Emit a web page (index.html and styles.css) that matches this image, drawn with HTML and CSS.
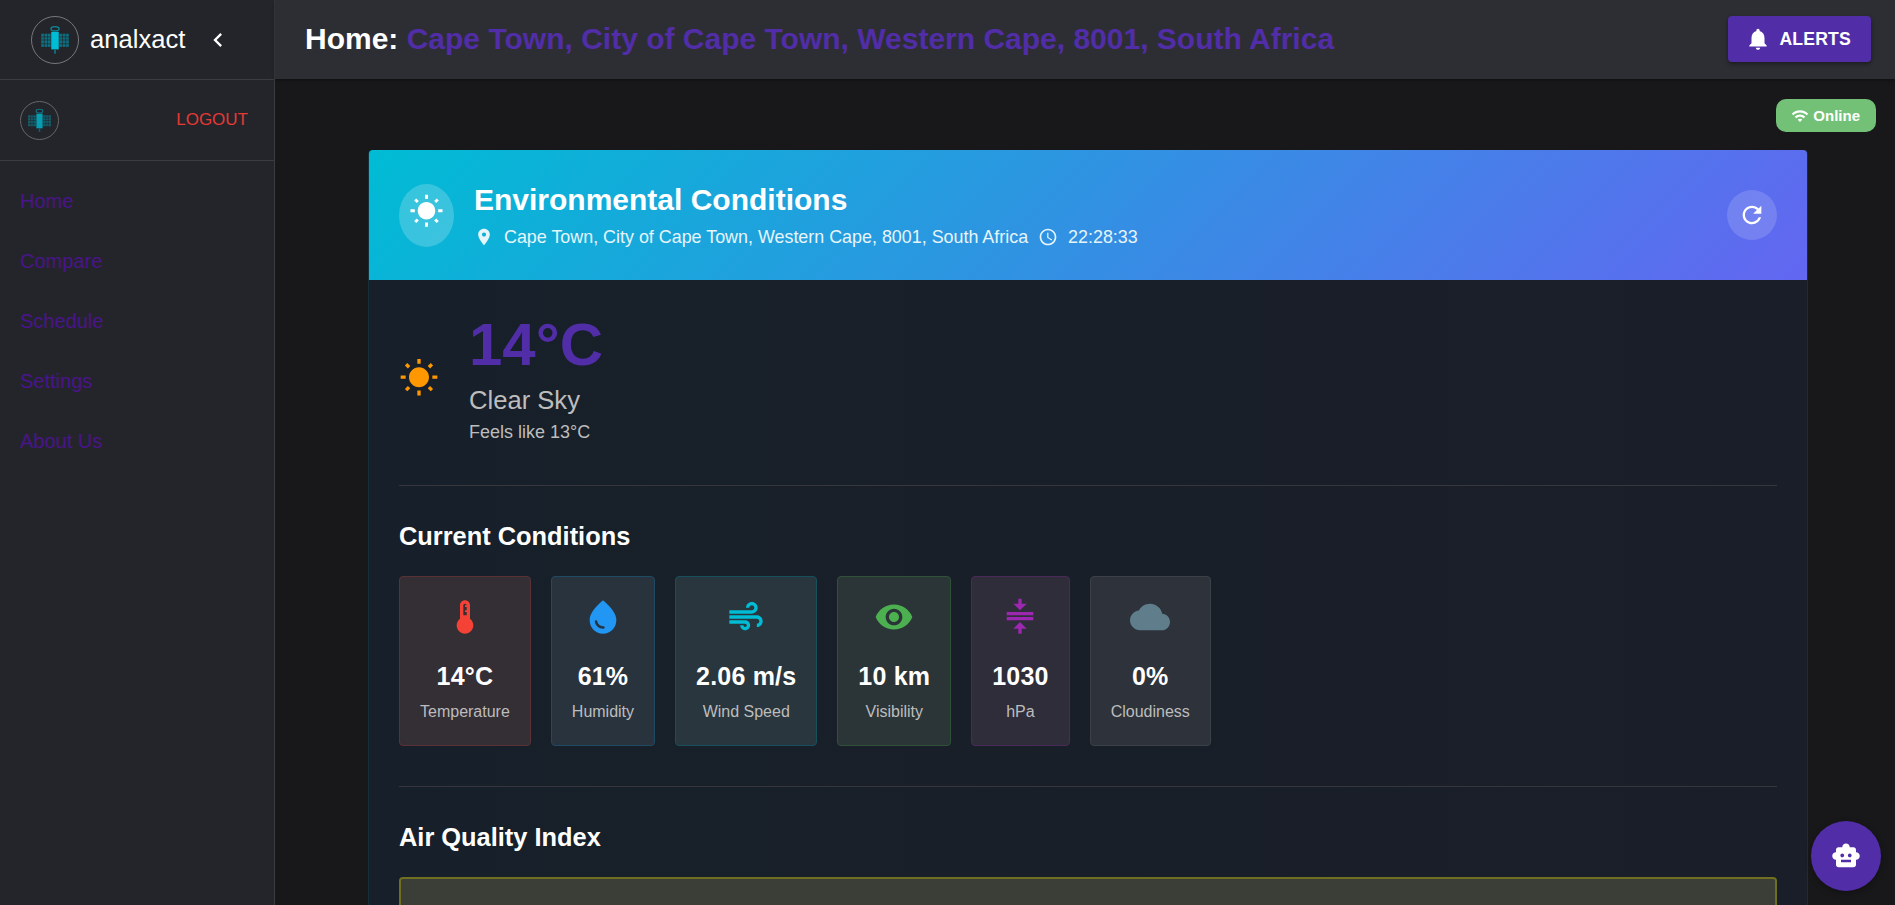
FILE: index.html
```html
<!DOCTYPE html>
<html lang="en">
<head>
    <meta charset="UTF-8">
    <meta name="viewport" content="width=device-width, initial-scale=1.0">
    <title>analxact</title>
    <link rel="stylesheet" href="styles.css">
</head>
<body>

    <!-- Shared icons -->
    <svg class="sprite" aria-hidden="true">
        <symbol id="i-sun" viewBox="0 0 24 24"><path d="M6.76 4.84l-1.8-1.79-1.41 1.41 1.79 1.79 1.42-1.41zM4 10.5H1v2h3v-2zm9-9.95h-2V3.5h2V.55zm7.45 3.91l-1.41-1.41-1.79 1.79 1.41 1.41 1.79-1.79zm-3.21 13.7l1.79 1.8 1.41-1.41-1.8-1.79-1.4 1.4zM20 10.5v2h3v-2h-3zm-8-5c-3.31 0-6 2.69-6 6s2.69 6 6 6 6-2.69 6-6-2.69-6-6-6zm-1 16.95h2V19.5h-2v2.95zm-7.45-3.91l1.41 1.41 1.79-1.8-1.41-1.41-1.79 1.8z"/></symbol>
        <symbol id="i-sat" viewBox="0 0 48 48">
            <rect x="2" y="14" width="15" height="21" fill="#0e6f80"/>
            <rect x="31" y="14" width="15" height="21" fill="#0e6f80"/>
            <path d="M7 14v21M12 14v21M36 14v21M41 14v21M2 19h15M2 24h15M2 30h15M31 19h15M31 24h15M31 30h15" stroke="#24252a" stroke-width="1"/>
            <rect x="18" y="11" width="12" height="28" fill="#00bcd4"/>
            <rect x="22.5" y="39" width="3" height="7" fill="#0e6f80"/>
            <ellipse cx="24" cy="6" rx="6.5" ry="3.5" fill="none" stroke="#0e8a9c" stroke-width="2"/>
        </symbol>
    </svg>

    <aside class="sidebar">
        <div class="brand">
            <span class="logo logo-large"><svg><use href="#i-sat"/></svg></span>
            <span class="brand-name">analxact</span>
            <svg class="chevron" viewBox="0 0 24 24"><path d="M15.41 7.41L14 6l-6 6 6 6 1.41-1.41L10.83 12z"/></svg>
        </div>
        <div class="account">
            <span class="logo logo-small"><svg><use href="#i-sat"/></svg></span>
            <a class="logout">LOGOUT</a>
        </div>
        <nav class="nav">
            <a>Home</a>
            <a>Compare</a>
            <a>Schedule</a>
            <a>Settings</a>
            <a>About Us</a>
        </nav>
    </aside>

    <div class="main">
        <header class="topbar">
            <h1>Home: <span>Cape Town, City of Cape Town, Western Cape, 8001, South Africa</span></h1>
            <button class="alerts">
                <svg viewBox="0 0 24 24"><path d="M12 22c1.1 0 2-.9 2-2h-4c0 1.1.89 2 2 2zm6-6v-5c0-3.07-1.64-5.64-4.5-6.32V4c0-.83-.67-1.5-1.5-1.5s-1.5.67-1.5 1.5v.68C7.63 5.36 6 7.92 6 11v5l-2 2v1h16v-1l-2-2z"/></svg>
                ALERTS
            </button>
        </header>

        <div class="content">
            <div class="status-row">
                <span class="online">
                    <svg viewBox="0 0 24 24"><path d="M1 9l2 2c4.97-4.97 13.03-4.97 18 0l2-2C16.93 2.93 7.08 2.93 1 9zm8 8l3 3 3-3c-1.65-1.66-4.34-1.66-6 0zm-4-4l2 2c2.76-2.76 7.24-2.76 10 0l2-2C15.14 9.14 8.87 9.14 5 13z"/></svg>
                    Online
                </span>
            </div>

            <section class="card">
                <div class="card-header">
                    <span class="avatar"><svg><use href="#i-sun"/></svg></span>
                    <div class="heading">
                        <h2>Environmental Conditions</h2>
                        <div class="meta">
                            <svg viewBox="0 0 24 24"><path d="M12 2C8.13 2 5 5.13 5 9c0 5.25 7 13 7 13s7-7.75 7-13c0-3.87-3.13-7-7-7zm0 9.5c-1.38 0-2.5-1.12-2.5-2.5s1.12-2.5 2.5-2.5 2.5 1.12 2.5 2.5-1.12 2.5-2.5 2.5z"/></svg>
                            <span>Cape Town, City of Cape Town, Western Cape, 8001, South Africa</span>
                            <svg viewBox="0 0 24 24"><path d="M11.99 2C6.47 2 2 6.48 2 12s4.47 10 9.99 10C17.52 22 22 17.52 22 12S17.52 2 11.99 2zM12 20c-4.42 0-8-3.58-8-8s3.58-8 8-8 8 3.58 8 8-3.58 8-8 8z"/><path d="M12.5 7H11v6l5.25 3.15.75-1.23-4.5-2.67z"/></svg>
                            <span>22:28:33</span>
                        </div>
                    </div>
                    <button class="refresh">
                        <svg viewBox="0 0 24 24"><path d="M17.65 6.35C16.2 4.9 14.21 4 12 4c-4.42 0-7.99 3.58-7.99 8s3.57 8 7.99 8c3.73 0 6.84-2.55 7.73-6h-2.08c-.82 2.33-3.04 4-5.65 4-3.31 0-6-2.69-6-6s2.69-6 6-6c1.66 0 3.14.69 4.22 1.78L13 11h7V4l-2.35 2.35z"/></svg>
                    </button>
                </div>

                <div class="card-body">
                    <div class="summary">
                        <svg class="summary-icon"><use href="#i-sun"/></svg>
                        <div>
                            <div class="temp">14°C</div>
                            <div class="sky">Clear Sky</div>
                            <div class="feels">Feels like 13°C</div>
                        </div>
                    </div>

                    <hr>

                    <h3>Current Conditions</h3>
                    <div class="metrics">
                        <div class="metric red">
                            <svg viewBox="0 0 24 24"><path d="M15 13V5c0-1.66-1.34-3-3-3S9 3.34 9 5v8c-1.21.91-2 2.37-2 4 0 2.76 2.24 5 5 5s5-2.24 5-5c0-1.63-.79-3.09-2-4zm-4-8c0-.55.45-1 1-1s1 .45 1 1h-1v1h1v2h-1v1h1v2h-2V5z"/></svg>
                            <div class="value">14°C</div>
                            <div class="label">Temperature</div>
                        </div>
                        <div class="metric blue">
                            <svg viewBox="0 0 24 24"><path d="M12 2c-5.33 4.55-8 8.48-8 11.8 0 4.98 3.8 8.2 8 8.2s8-3.22 8-8.2c0-3.32-2.67-7.25-8-11.8zM7.83 14c.37 0 .67.26.74.62.41 2.22 2.28 2.98 3.64 2.87.43-.02.79.32.79.75 0 .4-.32.73-.72.75-2.13.13-4.62-1.09-5.19-4.12-.08-.45.28-.87.74-.87z"/></svg>
                            <div class="value">61%</div>
                            <div class="label">Humidity</div>
                        </div>
                        <div class="metric cyan">
                            <svg viewBox="0 0 24 24"><path d="M14.5 17c0 1.65-1.35 3-3 3s-3-1.35-3-3h2c0 .55.45 1 1 1s1-.45 1-1-.45-1-1-1H2v-2h9.5c1.65 0 3 1.35 3 3zM19 6.5C19 4.57 17.43 3 15.5 3S12 4.57 12 6.5h2c0-.83.67-1.5 1.5-1.5s1.5.67 1.5 1.5S16.33 8 15.5 8H2v2h13.5c1.93 0 3.5-1.57 3.5-3.5zm-.5 4.5H2v2h16.5c.83 0 1.5.67 1.5 1.5s-.67 1.5-1.5 1.5v2c1.93 0 3.5-1.57 3.5-3.5S20.43 11 18.5 11z"/></svg>
                            <div class="value">2.06 m/s</div>
                            <div class="label">Wind Speed</div>
                        </div>
                        <div class="metric green">
                            <svg viewBox="0 0 24 24"><path d="M12 4.5C7 4.5 2.73 7.61 1 12c1.73 4.39 6 7.5 11 7.5s9.27-3.11 11-7.5c-1.73-4.39-6-7.5-11-7.5zM12 17c-2.76 0-5-2.24-5-5s2.24-5 5-5 5 2.24 5 5-2.24 5-5 5zm0-8c-1.66 0-3 1.34-3 3s1.34 3 3 3 3-1.34 3-3-1.34-3-3-3z"/></svg>
                            <div class="value">10 km</div>
                            <div class="label">Visibility</div>
                        </div>
                        <div class="metric purple">
                            <svg viewBox="0 0 24 24"><path d="M8 19h3v3h2v-3h3l-4-4-4 4zm8-15h-3V1h-2v3H8l4 4 4-4zM4 9v2h16V9H4zm0 3h16v2H4v-2z"/></svg>
                            <div class="value">1030</div>
                            <div class="label">hPa</div>
                        </div>
                        <div class="metric grey">
                            <svg viewBox="0 0 24 24"><path d="M19.35 10.04C18.67 6.59 15.64 4 12 4 9.11 4 6.6 5.64 5.35 8.04 2.34 8.36 0 10.91 0 14c0 3.31 2.69 6 6 6h13c2.76 0 5-2.24 5-5 0-2.64-2.05-4.78-4.65-4.96z"/></svg>
                            <div class="value">0%</div>
                            <div class="label">Cloudiness</div>
                        </div>
                    </div>

                    <hr>

                    <h3>Air Quality Index</h3>
                    <div class="aqi"></div>
                </div>
            </section>
        </div>
    </div>

    <button class="bot">
        <svg viewBox="0 0 24 24"><path d="M20 9V7c0-1.1-.9-2-2-2h-3c0-1.66-1.34-3-3-3S9 3.34 9 5H6c-1.1 0-2 .9-2 2v2c-1.66 0-3 1.34-3 3s1.34 3 3 3v4c0 1.1.9 2 2 2h12c1.1 0 2-.9 2-2v-4c1.66 0 3-1.34 3-3s-1.34-3-3-3zM7.5 11.5C7.5 10.67 8.17 10 9 10s1.5.67 1.5 1.5S9.83 13 9 13s-1.5-.67-1.5-1.5zM16 17H8v-2h8v2zm-1-4c-.83 0-1.5-.67-1.5-1.5S14.17 10 15 10s1.5.67 1.5 1.5S15.83 13 15 13z"/></svg>
    </button>

</body>
</html>
```

FILE: styles.css
```css
* {
    box-sizing: border-box;
}

body {
    margin: 0;
    height: 100vh;
    overflow: hidden;
    display: flex;
    background: #18181a;
    color: #fff;
    font-family: "Liberation Sans", Arial, sans-serif;
}

svg {
    fill: currentColor;
    display: block;
    flex-shrink: 0;
}

.sprite {
    display: none;
}

/* Sidebar */
.sidebar {
    width: 275px;
    flex-shrink: 0;
    background: #24252a;
    border-right: 1px solid #3b3c42;
}

.brand {
    height: 80px;
    display: flex;
    align-items: center;
    padding-left: 31px;
    border-bottom: 1px solid #3b3c42;
}

.logo {
    display: flex;
    align-items: center;
    justify-content: center;
    border: 1px solid #77787c;
    border-radius: 50%;
}

.logo-large {
    width: 48px;
    height: 48px;
}

.logo-large svg {
    width: 30px;
    height: 30px;
}

.logo-small {
    width: 39px;
    height: 39px;
    opacity: 0.8;
}

.logo-small svg {
    width: 25px;
    height: 25px;
}

.brand-name {
    margin-left: 11px;
    font-size: 25.6px;
}

.chevron {
    width: 28px;
    height: 28px;
    margin-left: 19px;
}

.account {
    height: 81px;
    display: flex;
    align-items: center;
    justify-content: space-between;
    padding: 0 26px 0 20px;
    border-bottom: 1px solid #3b3c42;
}

.logout {
    color: #e53935;
    font-size: 17px;
}

.nav {
    display: flex;
    flex-direction: column;
    padding-top: 10px;
}

.nav a {
    height: 60px;
    line-height: 60px;
    padding-left: 20px;
    color: #4a148c;
    font-size: 20px;
}

/* Top bar */
.main {
    flex: 1;
    min-width: 0;
}

.topbar {
    height: 79px;
    display: flex;
    align-items: center;
    justify-content: space-between;
    padding: 0 24px 1px 30px;
    background: #2d2e33;
    box-shadow: 0 1px 3px rgba(0, 0, 0, 0.4);
}

.topbar h1 {
    margin: 0;
    font-size: 30px;
}

.topbar h1 span {
    color: #512da8;
}

.alerts {
    display: flex;
    align-items: center;
    gap: 8px;
    height: 46px;
    padding: 0 20px 0 17px;
    border: 0;
    border-radius: 4px;
    background: #512da8;
    color: #fff;
    font: bold 17.6px "Liberation Sans", Arial, sans-serif;
    letter-spacing: 0.2px;
    box-shadow: 0 2px 4px rgba(0, 0, 0, 0.4);
}

.alerts svg {
    width: 26px;
    height: 26px;
}

/* Page content */
.content {
    padding: 20px 19px 0 93px;
}

.status-row {
    display: flex;
    justify-content: flex-end;
    height: 51px;
}

.online {
    display: flex;
    align-items: center;
    gap: 4px;
    height: 33px;
    padding: 0 16px 0 15px;
    border-radius: 10px;
    background: #72c177;
    font-size: 15px;
    font-weight: bold;
}

.online svg {
    width: 18px;
    height: 18px;
}

.card {
    width: 1440px;
    border-radius: 4px 4px 0 0;
    background: linear-gradient(90deg, #17202a, #1a1e28);
    border: 1px solid #15303a;
    border-top: 0;
}

.card-header {
    height: 130px;
    display: flex;
    align-items: center;
    padding: 0 30px;
    border-radius: 4px 4px 0 0;
    background: linear-gradient(135deg, #00bcd4, #6366f1);
}

.avatar {
    width: 55px;
    height: 63px;
    display: flex;
    align-items: center;
    justify-content: center;
    border-radius: 50%;
    background: rgba(255, 255, 255, 0.2);
}

.avatar svg {
    width: 35px;
    height: 35px;
    margin-bottom: 8px;
}

.heading {
    flex: 1;
    margin-left: 20px;
}

.heading h2 {
    margin: 0 0 10px;
    font-size: 30px;
}

.meta {
    display: flex;
    align-items: center;
    font-size: 17.9px;
    color: #e6f5fa;
}

.meta svg {
    width: 20px;
    height: 20px;
    margin-right: 10px;
}

.meta span {
    margin-right: 10px;
}

.refresh {
    width: 50px;
    height: 50px;
    display: flex;
    align-items: center;
    justify-content: center;
    border: 0;
    border-radius: 50%;
    background: rgba(255, 255, 255, 0.15);
    color: #fff;
}

.refresh svg {
    width: 28px;
    height: 28px;
}

.card-body {
    padding: 35px 30px 0;
}

.summary {
    display: flex;
    align-items: center;
    gap: 30px;
    margin-bottom: 42px;
}

.summary-icon {
    width: 40px;
    height: 40px;
    margin-bottom: 2px;
    color: #ff9800;
}

.temp {
    font-size: 60px;
    line-height: 1;
    font-weight: bold;
    color: #512da8;
}

.sky {
    margin-top: 11px;
    font-size: 25.6px;
    color: #bdbdbd;
}

.feels {
    margin-top: 7px;
    font-size: 18px;
    color: #bdbdbd;
}

hr {
    margin: 40px 0 36px;
    border: 0;
    border-top: 1px solid #35373d;
}

.summary + hr {
    margin-top: 0;
}

h3 {
    margin: 0 0 25px;
    font-size: 25.4px;
}

.metrics {
    display: flex;
    gap: 20px;
}

.metric {
    height: 170px;
    padding: 20px 20px 0;
    display: flex;
    flex-direction: column;
    align-items: center;
    border: 1px solid;
    border-radius: 4px;
}

.metric svg {
    width: 40px;
    height: 40px;
}

.value {
    margin-top: 25px;
    font-size: 25px;
    font-weight: bold;
    letter-spacing: 0.2px;
}

.label {
    margin-top: 12px;
    font-size: 16px;
    color: #bdbdbd;
}

.red { background: #342e35; border-color: #5a3236; }
.red svg { color: #f44336; }
.blue { background: #29333e; border-color: #1f4a63; }
.blue svg { color: #2196f3; }
.cyan { background: #29363e; border-color: #17505d; }
.cyan svg { color: #00bcd4; }
.green { background: #2b3538; border-color: #2f5337; }
.green svg { color: #4caf50; }
.purple { background: #2f2d3a; border-color: #4a2a58; }
.purple svg { color: #9c27b0; }
.grey { background: #2e323b; border-color: #3c4148; }
.grey svg { color: #607d8b; }

.aqi {
    height: 120px;
    border: 2px solid #6f6f1f;
    border-radius: 4px;
    background: #3b3d37;
}

/* Chat button */
.bot {
    position: fixed;
    right: 14px;
    bottom: 14px;
    width: 70px;
    height: 70px;
    display: flex;
    align-items: center;
    justify-content: center;
    border: 0;
    border-radius: 50%;
    background: #512da8;
    color: #fff;
    box-shadow: 0 2px 6px rgba(0, 0, 0, 0.3);
}

.bot svg {
    width: 30px;
    height: 30px;
}
```
